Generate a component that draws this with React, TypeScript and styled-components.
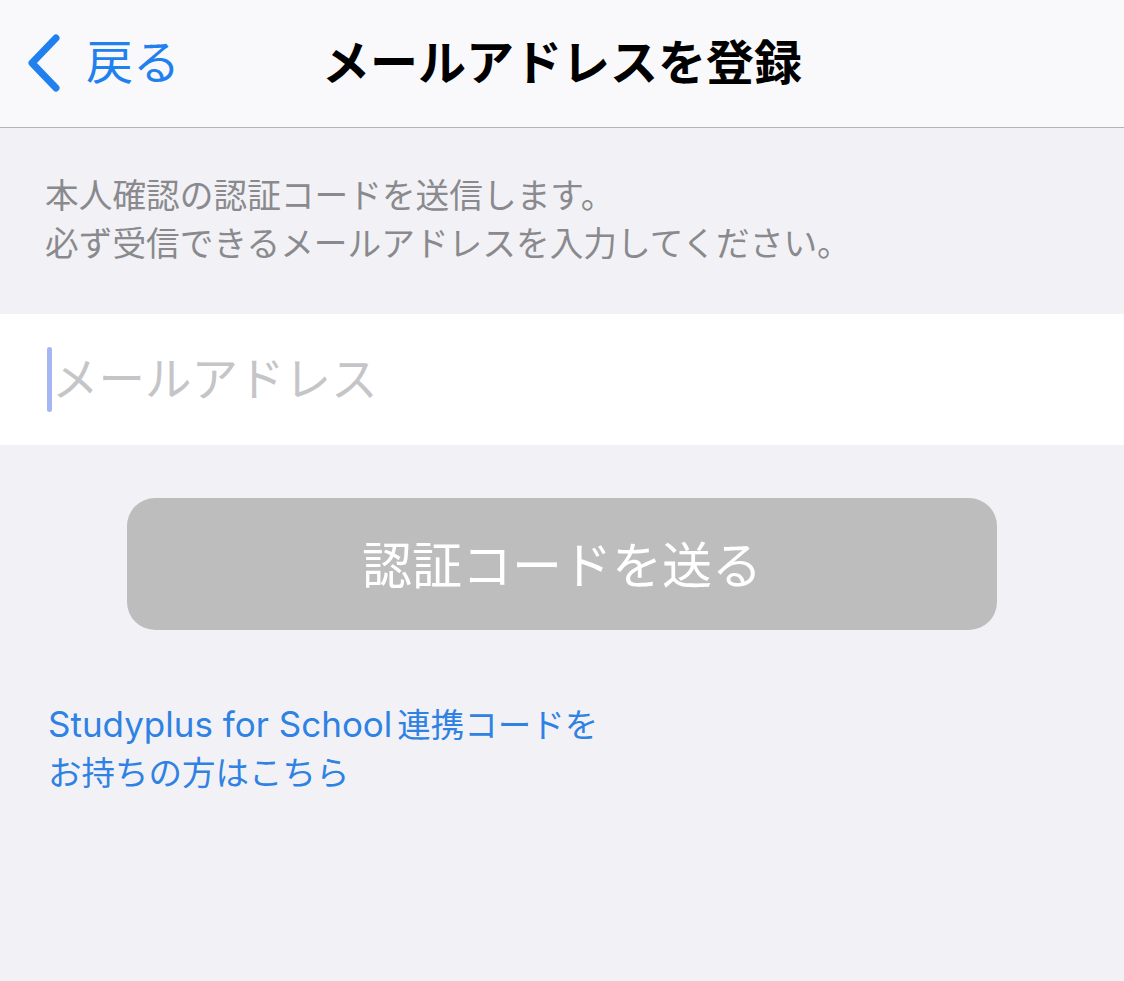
import styled, { createGlobalStyle } from "styled-components";

const GlobalStyle = createGlobalStyle`
  html,
  body {
    margin: 0;
    padding: 0;
    background-color: #f2f2f6;
  }

  body {
    font-family: Inter, "Noto Sans CJK JP", sans-serif;
    -webkit-font-smoothing: antialiased;
  }

  * {
    box-sizing: border-box;
  }
`;

const BackChevron = () => (
  <svg width="36" height="60" viewBox="0 0 36 60" fill="none">
    <path
      d="M30 5 L6 30 L30 55"
      stroke="#1f80ee"
      strokeWidth="7"
      strokeLinecap="round"
      strokeLinejoin="round"
    />
  </svg>
);

export const App = () => {
  return (
    <Page>
      <GlobalStyle />
      <NavBar>
        <BackButton>
          <BackChevron />
          <BackLabel>戻る</BackLabel>
        </BackButton>
        <NavTitle>メールアドレスを登録</NavTitle>
        <span />
      </NavBar>

      <Description>
        本人確認の認証コードを送信します。
        <br />
        必ず受信できるメールアドレスを入力してください。
      </Description>

      <InputRow>
        <Caret />
        <EmailInput type="email" placeholder="メールアドレス" />
      </InputRow>

      <ButtonWrap>
        <SendButton disabled>認証コードを送る</SendButton>
      </ButtonWrap>

      <SchoolLink href="#">
        <Latin>Studyplus for School</Latin>連携コードを
        <br />
        お持ちの方はこちら
      </SchoolLink>
    </Page>
  );
};

export default App;

const Page = styled.div`
  width: 1124px;
  min-height: 981px;
  display: flex;
  flex-direction: column;
  background-color: #f2f2f6;
`;

const NavBar = styled.header`
  height: 128px;
  display: grid;
  grid-template-columns: 1fr auto 1fr;
  align-items: center;
  background-color: #f9f9fb;
  border-bottom: 1px solid #b4b4b6;
  padding: 0 26px 2px;
`;

const BackButton = styled.div`
  display: flex;
  align-items: center;
  gap: 24px;
  color: #1f80ee;
`;

const BackLabel = styled.span`
  font-size: 47px;
  line-height: 1;
  color: #1f80ee;
  margin-top: -2px;
`;

const NavTitle = styled.h1`
  margin: 0;
  font-size: 48px;
  font-weight: 700;
  color: #000000;
  line-height: 1;
`;

const Description = styled.p`
  margin: 0;
  padding: 44px 45px 46px;
  font-size: 33.7px;
  line-height: 48px;
  color: #8a8a8e;
`;

const InputRow = styled.div`
  height: 131px;
  display: flex;
  align-items: center;
  background-color: #ffffff;
  padding-left: 47px;
`;

const Caret = styled.span`
  width: 5px;
  height: 65px;
  border-radius: 3px;
  background-color: #a4b6f3;
  flex-shrink: 0;
`;

const EmailInput = styled.input`
  flex: 1;
  border: none;
  outline: none;
  background: transparent;
  padding: 0;
  margin-top: -2px;
  font-family: Inter, "Noto Sans CJK JP", sans-serif;
  font-size: 46.5px;
  color: #000000;

  &::placeholder {
    color: #c5c5c7;
  }
`;

const ButtonWrap = styled.div`
  display: flex;
  justify-content: center;
  padding: 53px 0 70px;
`;

const SendButton = styled.button`
  width: 870px;
  height: 132px;
  border: none;
  border-radius: 28px;
  background-color: #bdbdbd;
  color: #ffffff;
  font-family: Inter, "Noto Sans CJK JP", sans-serif;
  font-size: 50px;
  padding: 0 0 4px;
`;

const SchoolLink = styled.a`
  display: block;
  padding-left: 48px;
  font-size: 33.5px;
  line-height: 48px;
  color: #2f82e3;
  text-decoration: none;
`;

const Latin = styled.span`
  font-size: 35px;
  margin-right: 5px;
`;
